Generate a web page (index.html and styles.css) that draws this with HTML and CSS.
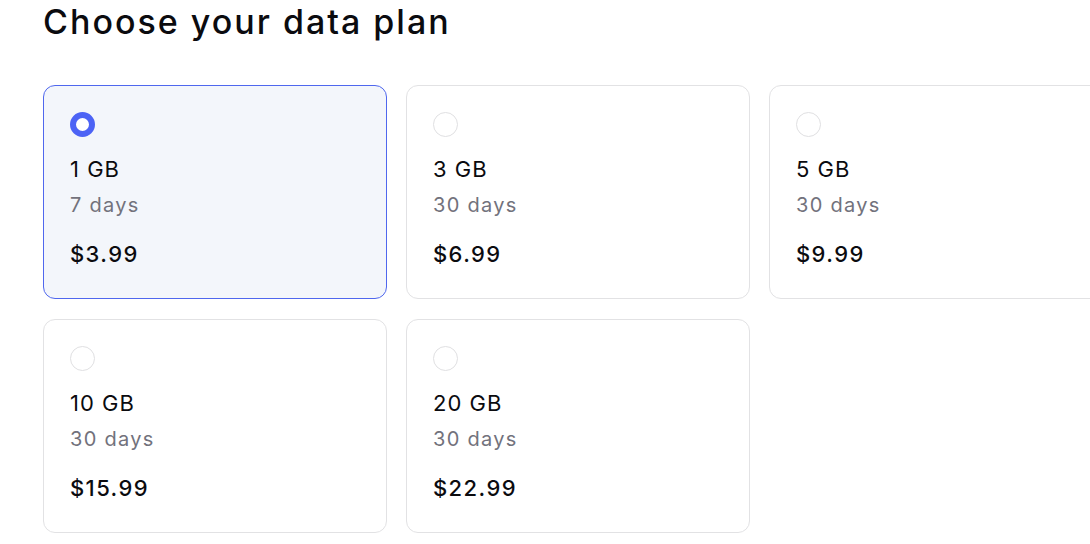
FILE: index.html
```html
<!DOCTYPE html>
<html lang="en">
<head>
<meta charset="utf-8">
<title>Choose your data plan</title>
<link rel="stylesheet" href="styles.css">
</head>
<body>
<main class="page">
  <h1 class="title">Choose your data plan</h1>
  <div class="plans">
    <label class="plan plan--selected">
      <span class="radio radio--on"></span>
      <span class="plan-size">1 GB</span>
      <span class="plan-days">7 days</span>
      <span class="plan-price">$3.99</span>
    </label>
    <label class="plan">
      <span class="radio"></span>
      <span class="plan-size">3 GB</span>
      <span class="plan-days">30 days</span>
      <span class="plan-price">$6.99</span>
    </label>
    <label class="plan">
      <span class="radio"></span>
      <span class="plan-size">5 GB</span>
      <span class="plan-days">30 days</span>
      <span class="plan-price">$9.99</span>
    </label>
    <label class="plan">
      <span class="radio"></span>
      <span class="plan-size">10 GB</span>
      <span class="plan-days">30 days</span>
      <span class="plan-price">$15.99</span>
    </label>
    <label class="plan">
      <span class="radio"></span>
      <span class="plan-size">20 GB</span>
      <span class="plan-days">30 days</span>
      <span class="plan-price">$22.99</span>
    </label>
  </div>
</main>
</body>
</html>
```

FILE: styles.css
```css
html, body {
  margin: 0;
  padding: 0;
  background: #ffffff;
}

body {
  font-family: "Inter", "Open Sans", "Liberation Sans", sans-serif;
  color: #0b0b0f;
  overflow: hidden;
}

.page {
  padding: 0 0 0 43px;
  width: 1200px;
}

.title {
  margin: 0;
  padding-top: 2px;
  font-size: 34px;
  line-height: 40px;
  font-weight: 500;
  letter-spacing: 2px;
}

.plans {
  margin-top: 43px;
  display: grid;
  grid-template-columns: repeat(3, 344px);
  grid-auto-rows: 214px;
  gap: 20px 19px;
}

.plan {
  box-sizing: border-box;
  display: flex;
  flex-direction: column;
  align-items: flex-start;
  border: 1px solid #e2e2e4;
  border-radius: 12px;
  padding: 26px 26px;
  background: #ffffff;
}

.plan--selected {
  border-color: #4f67ee;
  background: #f3f6fb;
}

.radio {
  box-sizing: border-box;
  width: 25px;
  height: 25px;
  border-radius: 50%;
  border: 1px solid #e0e0e2;
  background: #ffffff;
}

.radio--on {
  border: 6px solid #4c63f5;
  background: #ffffff;
}

.plan-size {
  margin-top: 17px;
  font-size: 22px;
  line-height: 30px;
  font-weight: 400;
  letter-spacing: 1px;
}

.plan-days {
  margin-top: 6px;
  font-size: 20px;
  line-height: 30px;
  color: #72727c;
  letter-spacing: 1.3px;
}

.plan-price {
  margin-top: 19px;
  font-size: 22px;
  line-height: 30px;
  font-weight: 500;
  letter-spacing: 1.4px;
}
```
